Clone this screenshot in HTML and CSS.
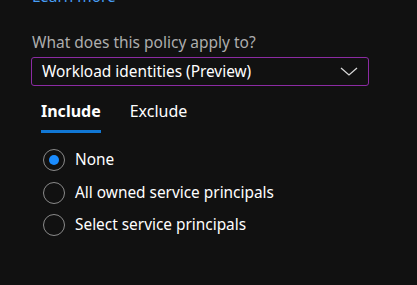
FILE: index.html
```html
<!DOCTYPE html>
<html lang="en">
<head>
  <meta charset="UTF-8">
  <title>Workload identities</title>
  <link rel="stylesheet" href="styles.css">
</head>
<body>
  <div class="panel">
    <a class="learn-more" href="#">Learn more</a>

    <label class="field-label" for="applyTo">What does this policy apply to?</label>
    <div class="dropdown" id="applyTo">
      <span class="dropdown-value">Workload identities (Preview)</span>
      <svg class="chevron" width="18" height="9" viewBox="0 0 18 9">
        <path d="M1 1 L9 8 L17 1" fill="none" stroke="#d6d6d6" stroke-width="1.3"/>
      </svg>
    </div>

    <nav class="tabs">
      <a class="tab active" href="#">Include</a>
      <a class="tab" href="#">Exclude</a>
    </nav>

    <div class="radio-group">
      <label class="radio">
        <span class="radio-circle checked"></span>
        <span>None</span>
      </label>
      <label class="radio">
        <span class="radio-circle"></span>
        <span>All owned service principals</span>
      </label>
      <label class="radio">
        <span class="radio-circle"></span>
        <span>Select service principals</span>
      </label>
    </div>
  </div>
</body>
</html>
```

FILE: styles.css
```css
/* Base */
* { margin: 0; padding: 0; box-sizing: border-box; }
body {
  background: #111111;
  color: #ffffff;
  font-family: 'Noto Sans', 'Open Sans', sans-serif;
  font-size: 15.4px;
}
.panel {
  margin-top: -13px;
  padding-left: 32px;
  width: 369px;
  display: flex;
  flex-direction: column;
}
.learn-more {
  color: #479ef5;
  text-decoration: none;
  font-size: 15.4px;
  line-height: 20px;
}
.field-label {
  margin-top: 25px;
  color: #adadad;
  font-size: 15.5px;
  line-height: 20px;
}
/* Dropdown */
.dropdown {
  margin-top: 5px;
  height: 29px;
  margin-left: -1px;
  border: 1px solid #8c2ba3;
  border-radius: 3px;
  display: flex;
  align-items: center;
  justify-content: space-between;
  padding: 0 10px 0 10px;
}
.dropdown-value {
  font-size: 15.4px;
  color: #ffffff;
}
/* Tabs */
.tabs {
  display: flex;
  gap: 29px;
  margin-top: 11px;
  padding-left: 9px;
}
.tab {
  color: #ffffff;
  text-decoration: none;
  font-size: 16px;
  line-height: 22px;
  padding: 3px 0 8px;
  border-bottom: 3px solid transparent;
}
.tab.active {
  font-weight: 700;
  border-bottom-color: #1177d4;
}
/* Radios */
.radio-group {
  display: flex;
  flex-direction: column;
  gap: 10.5px;
  margin-top: 16px;
  padding-left: 11px;
}
.radio {
  display: flex;
  align-items: center;
  gap: 10px;
  font-size: 15.4px;
  line-height: 22px;
}
.radio-circle {
  width: 22px;
  height: 22px;
  border: 1px solid #8a8a8a;
  border-radius: 50%;
  display: flex;
  align-items: center;
  justify-content: center;
}
.radio-circle.checked::after {
  content: "";
  width: 10px;
  height: 10px;
  border-radius: 50%;
  background: #1a8cff;
}
```
